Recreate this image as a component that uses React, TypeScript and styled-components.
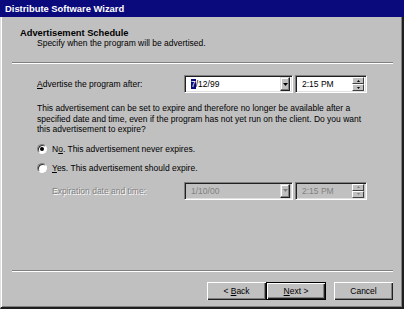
import React, {FC} from 'react';
import styled, {createGlobalStyle} from 'styled-components';

const Global = createGlobalStyle`
html, body {
    margin: 0;
    padding: 0;
    background: #c0c0c0;
}
* { box-sizing: border-box; }
`

//Window
const Window = styled.div`
width: 404px;
height: 309px;
display: flex;
flex-direction: column;
background: #c0c0c0;
font-family: "Liberation Sans", Arial, sans-serif;
font-size: 8.5px;
color: #000;
overflow: hidden;
`
const TitleBar = styled.div`
height: 17px;
flex: none;
background: #0a0a7c;
color: #fff;
font-weight: bold;
font-size: 9.4px;
line-height: 17px;
padding-left: 5px;
`
const Client = styled.div`
flex: 1;
display: flex;
flex-direction: column;
border-left: 1px solid #dfdfdf;
border-right: 2px solid #1e1e1e;
border-bottom: 2px solid #1e1e1e;
box-shadow: inset 1px 0 0 #fff, inset -1px -1px 0 #808080;
`
//Header
const Header = styled.div`
height: 45px;
padding-top: 11px;
`
const HeadTitle = styled.div`
font-weight: bold;
font-size: 9.3px;
line-height: 10px;
padding-left: 19px;
`
const HeadSub = styled.div`
line-height: 10px;
padding-left: 36px;
`
const Separator = styled.div`
height: 2px;
flex: none;
margin: 0 9px 0 11px;
border-top: 1px solid #808080;
border-bottom: 1px solid #fff;
`
//Body
const Body = styled.div`
flex: 1;
padding-left: 36px;
display: flex;
flex-direction: column;
`
const FieldRow = styled.div<{$top: number; $indent?: number}>`
display: flex;
align-items: center;
height: 18px;
margin-top: ${p => p.$top}px;
padding-left: ${p => p.$indent || 0}px;
`
const Label = styled.div<{$width: number; $disabled?: boolean}>`
width: ${p => p.$width}px;
color: ${p => p.$disabled ? '#808080' : '#000'};
text-shadow: ${p => p.$disabled ? '1px 1px 0 #fff' : 'none'};
`
const Field = styled.div<{$width: number; $disabled?: boolean}>`
width: ${p => p.$width}px;
height: 18px;
display: flex;
align-items: center;
padding: 0 2px 0 6px;
background: ${p => p.$disabled ? '#c0c0c0' : '#fff'};
color: ${p => p.$disabled ? '#808080' : '#000'};
border-style: solid;
border-width: 1px;
border-color: #808080 #fff #fff #808080;
box-shadow: inset 1px 1px 0 #202020, inset -1px -1px 0 #dfdfdf;
margin-right: 2px;
`
const FieldText = styled.span`
flex: 1;
`
const Sel = styled.span`
background: #0a0a7c;
color: #fff;
`
const DropButton = styled.div`
width: 10px;
height: 14px;
background: #c0c0c0;
border-style: solid;
border-width: 1px;
border-color: #dfdfdf #202020 #202020 #dfdfdf;
box-shadow: inset -1px -1px 0 #808080, inset 1px 1px 0 #fff;
display: flex;
align-items: center;
justify-content: center;
`
const Spinner = styled.div`
width: 12px;
height: 14px;
display: flex;
flex-direction: column;
`
const SpinHalf = styled.div`
flex: 1;
background: #c0c0c0;
border-style: solid;
border-width: 1px;
border-color: #fff #404040 #404040 #fff;
display: flex;
align-items: center;
justify-content: center;
`
const Para = styled.div`
margin-top: 10px;
line-height: 10.5px;
`
const RadioRow = styled.div<{$top: number}>`
display: flex;
align-items: center;
height: 12px;
margin-top: ${p => p.$top}px;
`
const RadioDot = styled.div<{$checked?: boolean}>`
width: 10px;
height: 10px;
border-radius: 50%;
margin-right: 5px;
border-style: solid;
border-width: 1px;
border-color: #808080 #fff #fff #808080;
background: #fff;
box-shadow: inset 1px 1px 0 #303030;
display: flex;
align-items: center;
justify-content: center;
&::after {
    content: '';
    width: 4px;
    height: 4px;
    border-radius: 50%;
    background: ${p => p.$checked ? '#000' : 'transparent'};
}
`
//Footer
const Footer = styled.div`
display: flex;
justify-content: flex-end;
padding: 10px 9px 7px 0;
`
const Button = styled.div<{$default?: boolean; $gap?: number}>`
height: 18px;
width: ${p => p.$default ? 60 : 59}px;
margin-left: ${p => p.$gap || 0}px;
display: flex;
align-items: center;
justify-content: center;
white-space: pre;
background: #c0c0c0;
border: ${p => p.$default ? '1px solid #000' : 'none'};
box-shadow: inset 1px 1px 0 #fff, inset -1px -1px 0 #202020, inset -2px -2px 0 #808080;
`

const Arrow: FC<{up?: boolean; size?: number; color?: string}> = ({up, size = 5, color = '#000'}) => (
    <svg width={size} height={Math.ceil(size / 2)} viewBox={`0 0 ${size} ${Math.ceil(size / 2)}`}>
        <polygon
            points={up ? `0,${Math.ceil(size / 2)} ${size},${Math.ceil(size / 2)} ${size / 2},0` : `0,0 ${size},0 ${size / 2},${Math.ceil(size / 2)}`}
            fill={color}/>
    </svg>
)

const DateTime: FC<{date: React.ReactNode; time: string; disabled?: boolean}> = ({date, time, disabled}) => (
    <>
        <Field $width={109} $disabled={disabled}>
            <FieldText>{date}</FieldText>
            <DropButton><Arrow size={5} color={disabled ? '#808080' : '#000'}/></DropButton>
        </Field>
        <Field $width={72} $disabled={disabled}>
            <FieldText>{time}</FieldText>
            <Spinner>
                <SpinHalf><Arrow up size={3} color={disabled ? '#808080' : '#000'}/></SpinHalf>
                <SpinHalf><Arrow size={3} color={disabled ? '#808080' : '#000'}/></SpinHalf>
            </Spinner>
        </Field>
    </>
)

export default function App() {
    return (
        <>
            <Global/>
            <Window>
                <TitleBar>Distribute Software Wizard</TitleBar>
                <Client>
                    <Header>
                        <HeadTitle>Advertisement Schedule</HeadTitle>
                        <HeadSub>Specify when the program will be advertised.</HeadSub>
                    </Header>
                    <Separator/>
                    <Body>
                        <FieldRow $top={11}>
                            <Label $width={147}><u>A</u>dvertise the program after:</Label>
                            <DateTime date={<><Sel>7</Sel>/12/99</>} time="2:15 PM"/>
                        </FieldRow>
                        <Para>
                            This advertisement can be set to expire and therefore no longer be available after a<br/>
                            specified date and time, even if the program has not yet run on the client. Do you want<br/>
                            this advertisement to expire?
                        </Para>
                        <RadioRow $top={8}>
                            <RadioDot $checked/>
                            <span>N<u>o</u>. This advertisement never expires.</span>
                        </RadioRow>
                        <RadioRow $top={7}>
                            <RadioDot/>
                            <span><u>Y</u>es. This advertisement should expire.</span>
                        </RadioRow>
                        <FieldRow $top={8} $indent={15}>
                            <Label $width={132} $disabled>Expiration date and time:</Label>
                            <DateTime date="1/10/00" time="2:15 PM" disabled/>
                        </FieldRow>
                    </Body>
                    <Separator/>
                    <Footer>
                        <Button>{'< '}<u>B</u>ack</Button>
                        <Button $default><u>N</u>ext{' >'}</Button>
                        <Button $gap={8}>Cancel</Button>
                    </Footer>
                </Client>
            </Window>
        </>
    );
}
